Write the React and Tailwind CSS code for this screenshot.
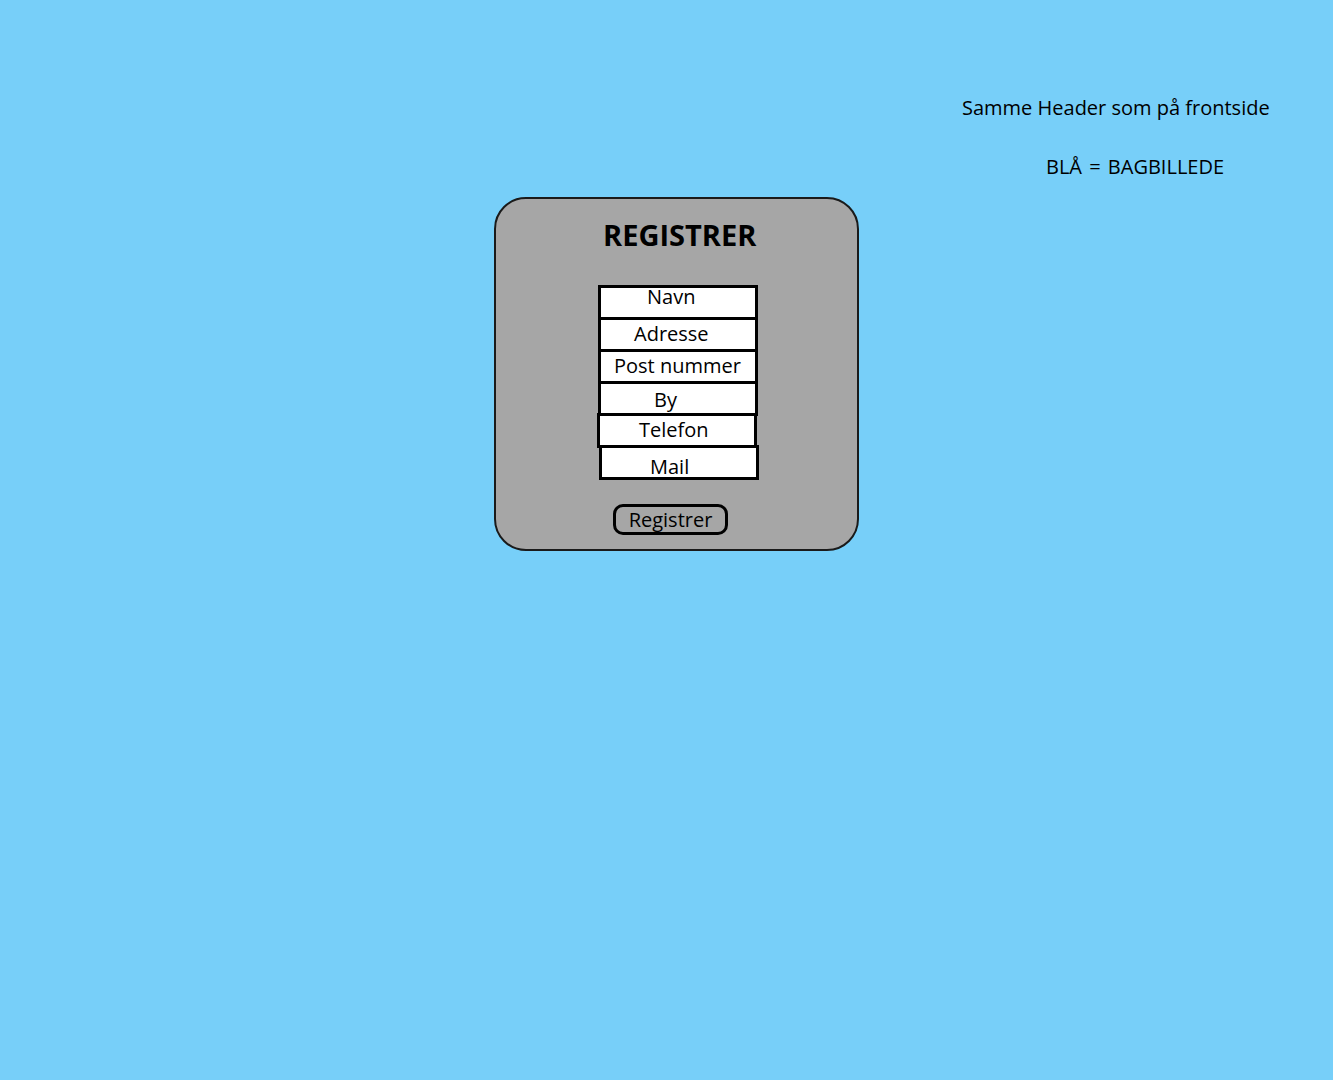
import React from 'react';

const fields = [
  { label: 'Navn', box: 'ml-[598px]', text: 'pl-[46px] leading-[18px]' },
  { label: 'Adresse', box: 'ml-[598px]', text: 'pl-[33px] pt-[2px] leading-[24px]' },
  { label: 'Post nummer', box: 'ml-[598px]', text: 'pl-[13px] pt-[2px] leading-[24px]' },
  { label: 'By', box: 'ml-[598px]', text: 'pl-[53px] pt-[4px] leading-[24px]' },
  { label: 'Telefon', box: 'ml-[597px]', text: 'pl-[39px] pt-[2px] leading-[24px]' },
  { label: 'Mail', box: 'ml-[599px]', text: 'pl-[48px] pt-[9px] leading-[20px]' },
];

export default function App() {
  return (
    <div
      className="min-h-[1080px] w-full bg-[#77cff9] text-black"
      style={{ fontFamily: '"Open Sans", "Noto Sans", sans-serif' }}
    >
      {/* Notes */}
      <div className="pt-[95px] pl-[962px]">
        <p className="text-[20px] leading-[26px]">Samme Header som på frontside</p>
        <p className="mt-[33px] pl-[84px] text-[20px] leading-[26px] [word-spacing:2px]">BLÅ = BAGBILLEDE</p>
      </div>

      {/* Card */}
      <div className="mt-[17px] ml-[494px] w-[365px] h-[354px] rounded-[32px] border-2 border-[#1a1a1a] bg-[#a6a6a6] flex flex-col">
        <h1 className="mt-[18px] ml-[107px] text-[29px] leading-[36px] font-bold">REGISTRER</h1>
        <div className="mt-[32px] -ml-[496px] flex flex-col">
          {fields.map((f) => (
            <div
              key={f.label}
              className={`${f.box} -mt-[3px] first:mt-0 w-[160px] h-[35px] border-[3px] border-black bg-white`}
            >
              <div className={`${f.text} text-[20px] whitespace-nowrap`}>{f.label}</div>
            </div>
          ))}
        </div>
        <button className="mt-[24px] ml-[117px] w-[115px] h-[31px] rounded-[10px] border-[3px] border-black bg-[#a6a6a6] text-[20px] leading-[22px] flex items-center justify-center">
          Registrer
        </button>
      </div>
    </div>
  );
}
